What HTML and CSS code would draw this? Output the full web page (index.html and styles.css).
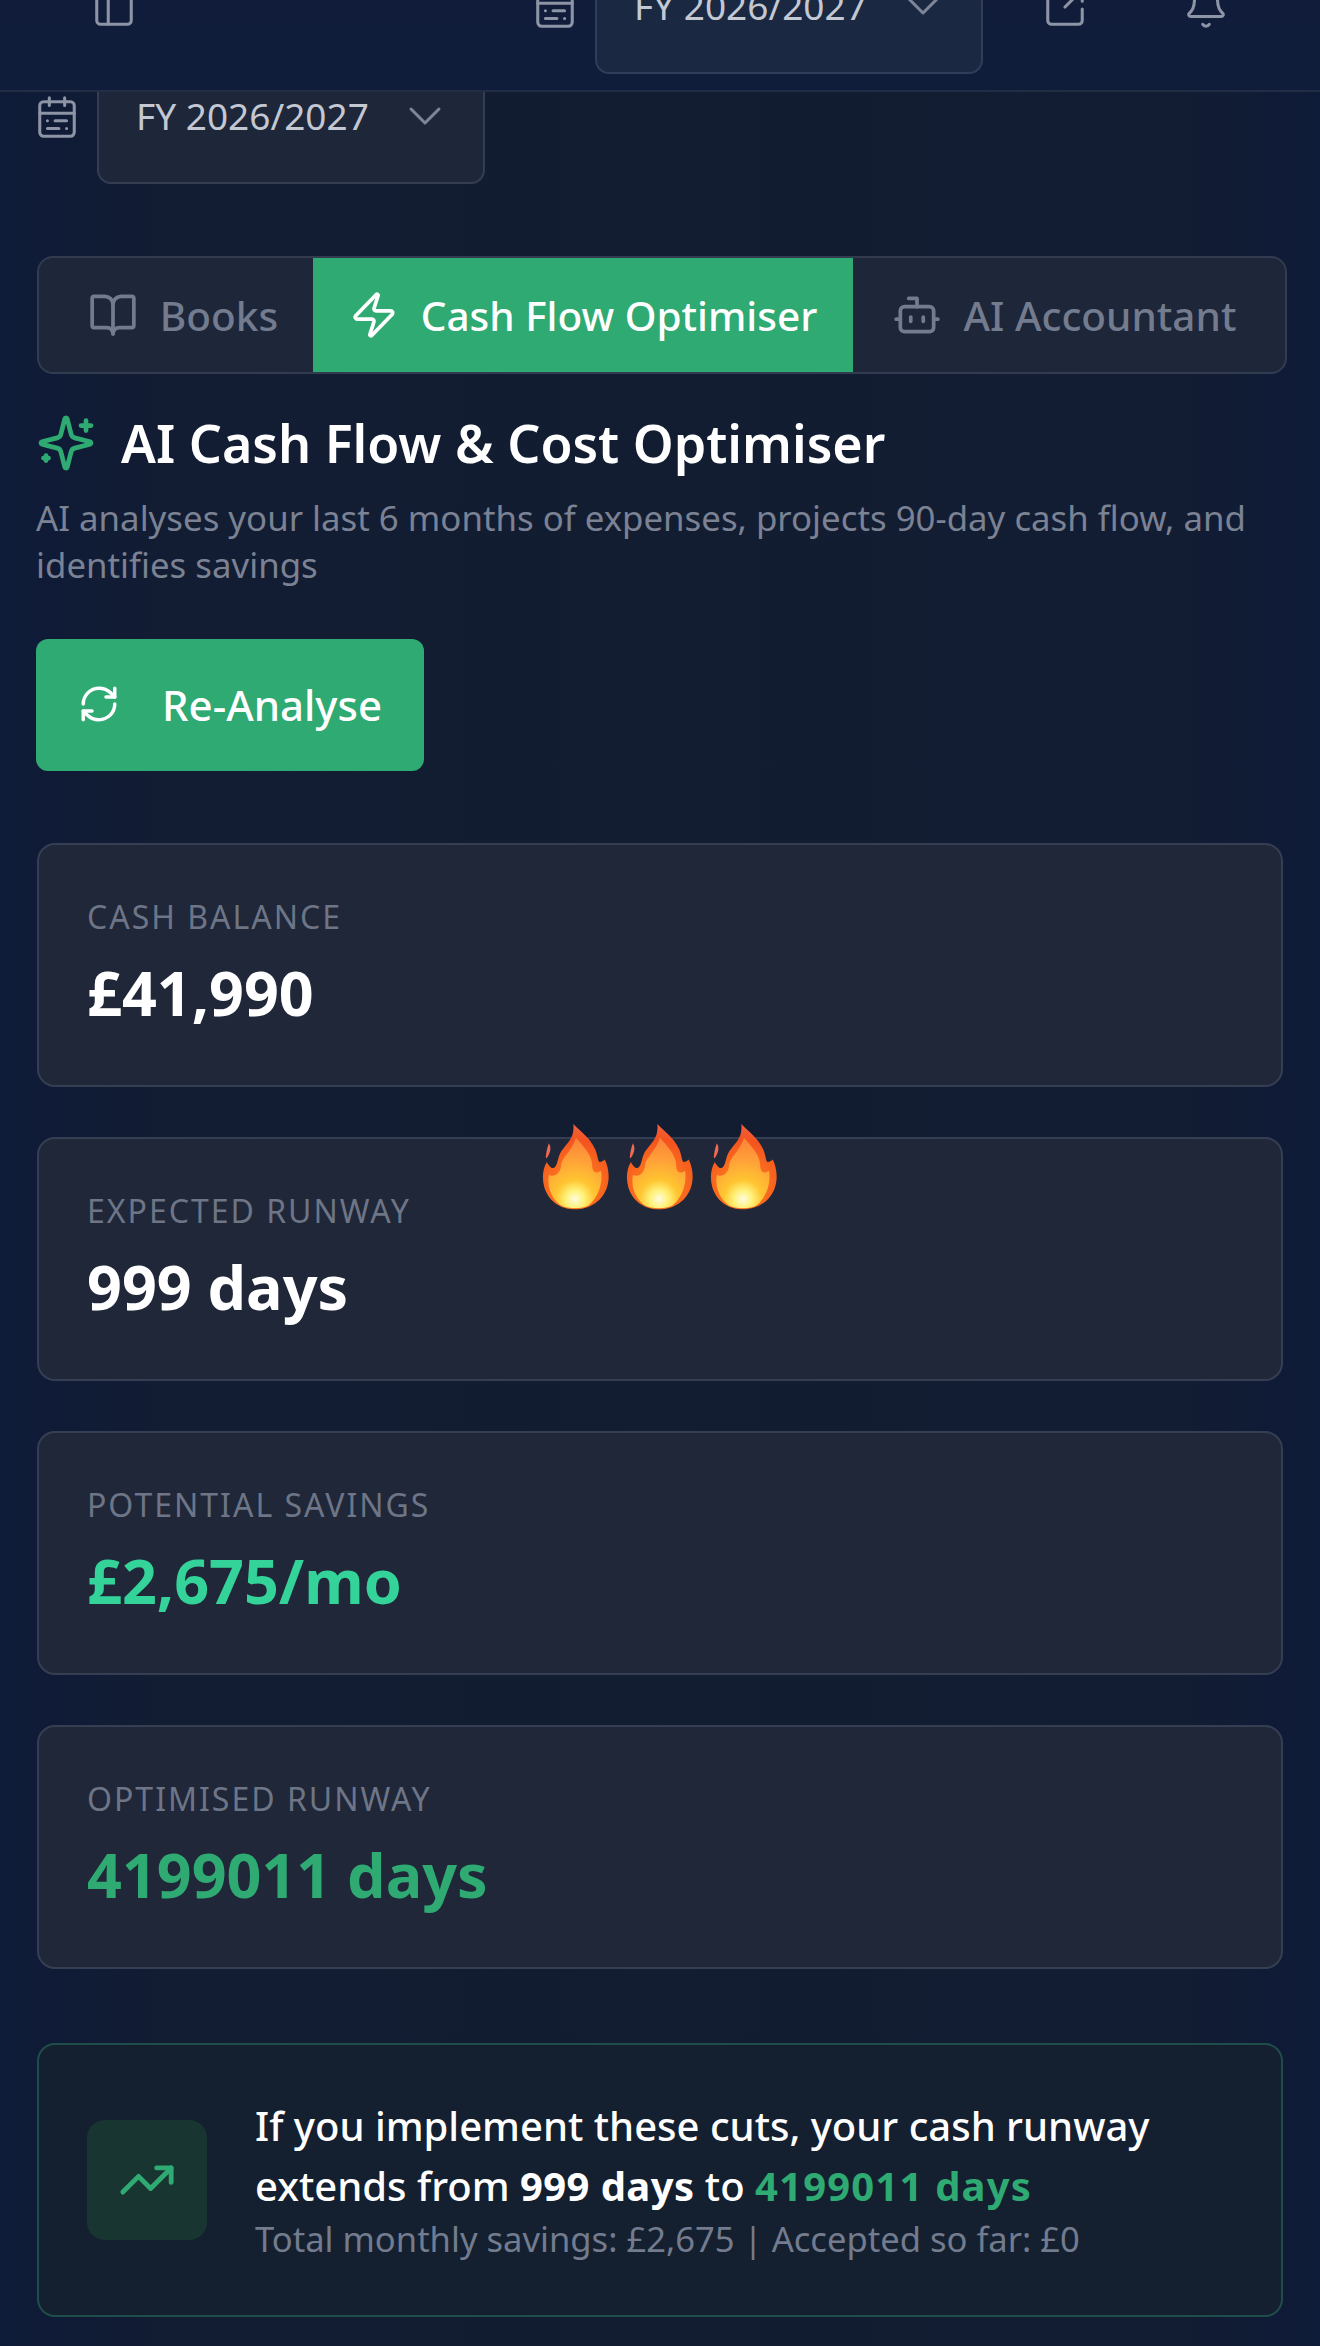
FILE: index.html
```html
<!DOCTYPE html>
<html lang="en">
<head>
  <meta charset="UTF-8">
  <title>AI Cash Flow &amp; Cost Optimiser</title>
  <link rel="stylesheet" href="styles.css">
</head>
<body>

<svg class="defs" width="0" height="0">
  <defs>
    <radialGradient id="flameGrad" gradientUnits="userSpaceOnUse" cx="95" cy="222" r="190">
      <stop offset="0" stop-color="#fffbe0"/>
      <stop offset="0.14" stop-color="#fff27a"/>
      <stop offset="0.3" stop-color="#ffc531"/>
      <stop offset="0.6" stop-color="#ffa238"/>
      <stop offset="1" stop-color="#fb7d3a"/>
    </radialGradient>
    <radialGradient id="flameOuter" gradientUnits="userSpaceOnUse" cx="95" cy="180" r="190">
      <stop offset="0" stop-color="#ff8a1e"/>
      <stop offset="0.7" stop-color="#f4531f"/>
      <stop offset="1" stop-color="#f0654a"/>
    </radialGradient>
    <symbol id="flame" viewBox="-2 0 200 254">
      <path fill="#ef6a52" d="M18 57C24 66 24 78 18 90C12 102 8 104 9 96C10 84 13 70 18 57Z"/>
      <path fill="url(#flameOuter)" d="M90 0C115 25 150 50 160 90C163 105 165 112 168 112C175 112 180 108 183 105C195 130 198 160 190 185C178 225 140 252 95 252C50 252 15 225 4 185C-3 160 0 130 12 112C17 122 25 132 32 130C45 125 42 100 55 80C72 55 95 40 90 0Z"/>
      <path fill="url(#flameGrad)" d="M98 40C120 68 146 90 146 125C146 140 156 150 172 138C178 170 166 215 136 240C118 252 72 252 52 240C22 218 12 180 18 150C32 158 52 148 54 122C56 98 85 82 98 40Z"/>
    </symbol>
  </defs>
</svg>

<header class="topbar">
  <div class="topbar-row">
    <svg class="ico ico-panel" viewBox="0 0 24 24"><rect x="3" y="3" width="18" height="18" rx="2"/><path d="M9 3v18"/></svg>
    <svg class="ico ico-cal" viewBox="0 0 24 24"><rect x="3" y="4" width="18" height="18" rx="2"/><path d="M16 2v4M3 10h18M8 2v4M17 14h-6M13 18H7M7 14h.01M17 18h.01"/></svg>
    <div class="fy-select fy-select-top">
      <span>FY 2026/2027</span>
      <svg class="chev" viewBox="0 0 24 24"><path d="m6 9 6 6 6-6"/></svg>
    </div>
    <svg class="ico ico-ext" viewBox="0 0 24 24"><path d="M21 13v6a2 2 0 0 1-2 2H5a2 2 0 0 1-2-2V5a2 2 0 0 1 2-2h6M21 3l-9 9M15 3h6v6"/></svg>
    <svg class="ico ico-bell" viewBox="0 0 24 24"><path d="M10.268 21a2 2 0 0 0 3.464 0"/><path d="M3.262 15.326A1 1 0 0 0 4 17h16a1 1 0 0 0 .74-1.673C19.41 13.956 18 12.499 18 8A6 6 0 0 0 6 8c0 4.499-1.411 5.956-2.738 7.326"/></svg>
  </div>
</header>

<main class="page">
  <div class="fy-row">
    <svg class="ico" viewBox="0 0 24 24"><rect x="3" y="4" width="18" height="18" rx="2"/><path d="M16 2v4M3 10h18M8 2v4M17 14h-6M13 18H7M7 14h.01M17 18h.01"/></svg>
    <div class="fy-select">
      <span>FY 2026/2027</span>
      <svg class="chev" viewBox="0 0 24 24"><path d="m6 9 6 6 6-6"/></svg>
    </div>
  </div>

  <nav class="tabs">
    <div class="tab tab-books">
      <svg class="tab-ico" viewBox="0 0 24 24"><path d="M12 7v14"/><path d="M3 18a1 1 0 0 1-1-1V4a1 1 0 0 1 1-1h5a4 4 0 0 1 4 4 4 4 0 0 1 4-4h5a1 1 0 0 1 1 1v13a1 1 0 0 1-1 1h-6a3 3 0 0 0-3 3 3 3 0 0 0-3-3z"/></svg>
      <span>Books</span>
    </div>
    <div class="tab tab-active">
      <svg class="tab-ico" viewBox="0 0 24 24"><path d="M4 14a1 1 0 0 1-.78-1.63l9.9-10.2a.5.5 0 0 1 .86.46l-1.92 6.02A1 1 0 0 0 13 10h7a1 1 0 0 1 .78 1.63l-9.9 10.2a.5.5 0 0 1-.86-.46l1.92-6.02A1 1 0 0 0 11 14z"/></svg>
      <span>Cash Flow Optimiser</span>
    </div>
    <div class="tab tab-ai">
      <svg class="tab-ico" viewBox="0 0 24 24"><path d="M12 8V4H8"/><rect x="4" y="8" width="16" height="12" rx="2"/><path d="M2 14h2M20 14h2M15 13v2M9 13v2"/></svg>
      <span>AI Accountant</span>
    </div>
  </nav>

  <div class="title-row">
    <svg class="spark" viewBox="0 0 24 24"><path d="M9.937 15.5A2 2 0 0 0 8.5 14.063l-6.135-1.582a.5.5 0 0 1 0-.962L8.5 9.936A2 2 0 0 0 9.937 8.5l1.582-6.135a.5.5 0 0 1 .963 0L14.063 8.5A2 2 0 0 0 15.5 9.937l6.135 1.581a.5.5 0 0 1 0 .964L15.5 14.063a2 2 0 0 0-1.437 1.437l-1.582 6.135a.5.5 0 0 1-.963 0z"/><path d="M20 3v4M22 5h-4M4 17v2M5 18H3"/></svg>
    <h1>AI Cash Flow &amp; Cost Optimiser</h1>
  </div>
  <p class="subtitle">AI analyses your last 6 months of expenses, projects 90-day cash flow, and identifies savings</p>

  <button class="analyse-btn">
    <svg viewBox="0 0 24 24"><path d="M3 12a9 9 0 0 1 9-9 9.75 9.75 0 0 1 6.74 2.74L21 8"/><path d="M21 3v5h-5"/><path d="M21 12a9 9 0 0 1-9 9 9.75 9.75 0 0 1-6.74-2.74L3 16"/><path d="M8 16H3v5"/></svg>
    <span>Re-Analyse</span>
  </button>

  <section class="stats">
    <div class="stat">
      <div class="stat-label">CASH BALANCE</div>
      <div class="stat-value">£41,990</div>
    </div>
    <div class="stat">
      <div class="stat-label">EXPECTED RUNWAY</div>
      <div class="stat-value">999 days</div>
    </div>
    <div class="stat">
      <div class="stat-label">POTENTIAL SAVINGS</div>
      <div class="stat-value mint">£2,675/mo</div>
    </div>
    <div class="stat">
      <div class="stat-label">OPTIMISED RUNWAY</div>
      <div class="stat-value green">4199011 days</div>
    </div>
  </section>

  <section class="banner">
    <div class="banner-icon">
      <svg viewBox="0 0 24 24"><path d="M16 7h6v6"/><path d="m22 7-8.5 8.5-5-5L2 17"/></svg>
    </div>
    <div class="banner-text">
      <p class="banner-main">If you implement these cuts, your cash runway extends from <strong>999 days</strong> to <strong class="green">4199011 days</strong></p>
      <p class="banner-sub">Total monthly savings: £2,675 | Accepted so far: £0</p>
    </div>
  </section>
</main>

<div class="flames">
  <svg class="flame"><use href="#flame"/></svg>
  <svg class="flame"><use href="#flame"/></svg>
  <svg class="flame"><use href="#flame"/></svg>
</div>

</body>
</html>
```

FILE: styles.css
```css
html, body {
  margin: 0;
  padding: 0;
}

body {
  position: relative;
  width: 1320px;
  height: 2346px;
  overflow: hidden;
  font-family: "Noto Sans", Arial, sans-serif;
  color: #fff;
  background: linear-gradient(90deg, #0e1b38 0%, #121c33 12%, #131d31 50%, #121c33 90%, #0e1b38 100%);
}

.defs {
  position: absolute;
}

svg {
  fill: none;
  stroke: currentColor;
  stroke-linecap: round;
  stroke-linejoin: round;
  stroke-width: 2;
}

.topbar {
  position: relative;
  z-index: 2;
  height: 92px;
  box-sizing: border-box;
  overflow: hidden;
  display: flex;
  align-items: flex-end;
  background: linear-gradient(180deg, #101c3a 0%, #0f1d3b 100%);
  border-bottom: 2px solid #222c44;
  padding-bottom: 16px;
}

.topbar-row {
  display: flex;
  align-items: center;
  height: 134px;
  width: 100%;
  flex: none;
  color: #8c94a6;
}

.ico {
  width: 46px;
  height: 46px;
  flex: none;
  color: #8c94a6;
  stroke-width: 1.6;
}

.ico-panel {
  margin-left: 91px;
}

.ico-cal {
  margin-left: 395px;
}

.fy-select {
  width: 388px;
  height: 134px;
  flex: none;
  box-sizing: border-box;
  display: flex;
  align-items: center;
  justify-content: space-between;
  padding: 0 30px 3px 37px;
  background: #1e2639;
  border: 2px solid #343d52;
  border-radius: 14px;
  font-size: 37px;
  color: #c3c8d2;
}

.fy-select-top {
  margin-left: 17px;
  background: #1b2842;
  border-color: #303c58;
}

.ico-ext {
  margin-left: 59px;
}

.ico-bell {
  margin-left: 95px;
}

.chev {
  width: 56px;
  height: 56px;
  flex: none;
  color: #7d8596;
  stroke-width: 1.3;
}

.page {
  padding: 0 37px;
}

.fy-row {
  margin-top: -41px;
  height: 132px;
  display: flex;
  align-items: center;
  gap: 17px;
}

.fy-row .ico {
  margin-left: -3px;
}

.tabs {
  margin: 73px -4px 0 0;
  height: 118px;
  box-sizing: border-box;
  display: grid;
  grid-template-columns: 274px 540px 1fr;
  background: #1e2639;
  border: 2px solid #323b50;
  border-radius: 16px;
  overflow: hidden;
}

.tab {
  display: flex;
  align-items: center;
  justify-content: center;
  gap: 22px;
  font-size: 40.5px;
  font-weight: 500;
  color: #737b8e;
}

.tab-books {
  padding-left: 14px;
}

.tab-ai {
  padding-right: 10px;
}

.tab-active {
  background: #2eaa72;
  color: #fff;
}

.tab-ico {
  width: 50px;
  height: 50px;
  flex: none;
  stroke-width: 1.8;
}

.title-row {
  display: flex;
  align-items: center;
  gap: 25px;
  margin-top: 35px;
  height: 68px;
}

.spark {
  width: 60px;
  height: 60px;
  flex: none;
  margin-left: -1px;
  color: #2eaa72;
  stroke-width: 1.9;
}

h1 {
  margin: 0;
  font-size: 52px;
  font-weight: 600;
  line-height: 68px;
}

.subtitle {
  margin: 17px 0 0 -1px;
  width: 1230px;
  font-size: 34.8px;
  line-height: 47px;
  color: #7a8293;
}

.analyse-btn {
  display: flex;
  align-items: center;
  width: 388px;
  height: 132px;
  margin: 51px 0 0 -1px;
  padding: 0 0 2px 42px;
  border: none;
  border-radius: 12px;
  background: #2eaa72;
  color: #fff;
  font-family: inherit;
  font-size: 42px;
  font-weight: 500;
  gap: 42px;
}

.analyse-btn svg {
  width: 42px;
  height: 42px;
  flex: none;
}

.stats {
  margin-top: 72px;
  display: flex;
  flex-direction: column;
  gap: 50px;
}

.stat {
  height: 244px;
  box-sizing: border-box;
  padding: 54px 48px 0;
  background: #1f2739;
  border: 2px solid #353e52;
  border-radius: 18px;
}

.stat-label {
  font-size: 32px;
  line-height: 36px;
  letter-spacing: 2px;
  color: #6d7586;
}

.stat-value {
  margin-top: 20px;
  font-size: 61px;
  line-height: 76px;
  font-weight: 700;
}

.mint {
  color: #34d399;
}

.stat-value.green,
strong.green {
  color: #2eaa72;
}

.banner {
  margin-top: 74px;
  height: 274px;
  box-sizing: border-box;
  display: flex;
  align-items: center;
  gap: 48px;
  padding: 0 48px;
  background: #14202f;
  border: 2px solid #1f4d49;
  border-radius: 18px;
}

.banner-icon {
  width: 120px;
  height: 120px;
  flex: none;
  display: flex;
  align-items: center;
  justify-content: center;
  background: #183532;
  border-radius: 18px;
  color: #2eaa72;
}

.banner-icon svg {
  width: 58px;
  height: 58px;
}

.banner-text {
  padding-bottom: 3px;
}

.banner-text p {
  margin: 0;
}

.banner-main {
  font-size: 40px;
  line-height: 60px;
  font-weight: 500;
}

.banner-main strong {
  font-weight: 700;
  letter-spacing: 0.4px;
}

.banner-main strong.green {
  letter-spacing: 1.2px;
}

.banner-sub {
  margin-top: 12px;
  font-size: 34.6px;
  line-height: 46px;
  color: #737b8e;
}

/* emoji stuck on top of the screenshot */
.flames {
  position: absolute;
  left: 542px;
  top: 1124px;
  display: flex;
  gap: 16px;
}

.flame {
  width: 68px;
  height: 86px;
  stroke: none;
}
```
